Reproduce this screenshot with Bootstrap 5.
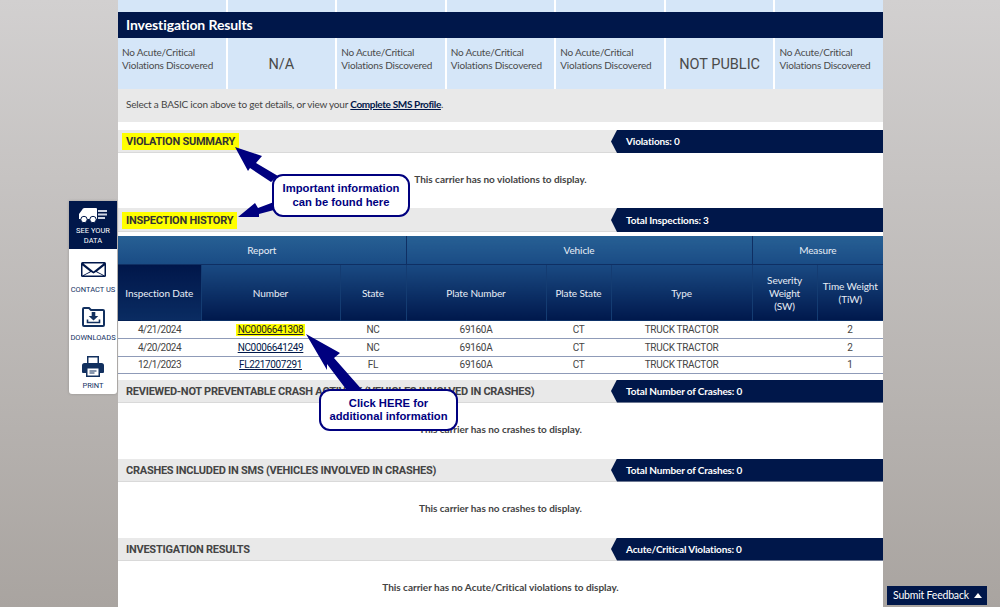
<!DOCTYPE html>
<html lang="en">
<head>
<meta charset="utf-8">
<title>Carrier Overview</title>
<link href="https://cdn.jsdelivr.net/npm/bootstrap@5.3.0/dist/css/bootstrap.min.css" rel="stylesheet">
<style>
html,body{height:607px;overflow:hidden}
body{background:linear-gradient(180deg,#d2d0d0 0,#a9a4a0 100%);font-family:Lato,"Liberation Sans",sans-serif;font-size:10px;letter-spacing:-.2px;color:#444;position:relative}
.sheet{width:765px;margin-left:118px;background:#fff;height:607px;overflow:hidden;position:relative}
.cellrow{display:grid;grid-template-columns:repeat(7,1fr);gap:2px;background:#fff}
.cellrow>div{background:#d5e6f8}
.toprow{height:12px}
.inforow{height:51px}
.inforow>div{padding:8px 4px;line-height:13px;font-size:10px;color:#4a4a4a;white-space:nowrap}
.inforow>.bigcell{font-family:Roboto,sans-serif;font-size:14.5px;letter-spacing:0;display:flex;align-items:center;justify-content:center;padding:2px 0 0}
.res-bar{height:26px;background:#00174a;color:#fff;font-weight:700;font-size:14px;letter-spacing:-.1px;padding-left:8px;line-height:26px}
.hint-bar{height:33px;background:#e9e9e9;padding-left:8px;line-height:31px;margin-bottom:8px}
.hint-bar a{color:#00174a;font-weight:700;letter-spacing:-.35px}
.sec-head{height:23px;background:#e9e9e9;border-bottom:1px solid #d9d9d9;padding-left:8px}
.sec-tall{height:24px}
.sec-tall .hl{margin-top:2px}
.sec-title{font-family:Roboto,sans-serif;font-size:11px;font-weight:700;color:#444;line-height:1;white-space:nowrap;letter-spacing:-.25px;margin-top:2px}
.hl{background:#ffff00;color:#333;margin:0 0 0 -4px;padding:3px 4px;display:inline-block}
.ribbon{flex:0 0 272px;align-self:stretch;margin-bottom:-1px;background:#00174a;color:#fff;font-weight:700;font-size:10px;letter-spacing:-.15px;display:flex;align-items:center;padding-left:15px;clip-path:polygon(6px 0,100% 0,100% 100%,6px 100%,0 50%)}
.sec-body{height:56px;text-align:center;font-weight:700;color:#444;padding-top:19px;line-height:14px;letter-spacing:-.03px}
.sec-first{height:55px}
.rec{width:765px;table-layout:fixed;border-collapse:collapse;margin:4px 0 5.5px}
.rec th{color:#e8eef6;font-weight:400;font-size:10px;letter-spacing:-.1px;text-align:center;vertical-align:middle;padding:1px 0 0;line-height:13px}
.rec .r1 th{height:28px;background:linear-gradient(180deg,#276094,#1a4c85);border-right:1px solid #0f2f63;border-bottom:1px solid #0f2f63}
.rec .r2 th{height:57px;background:linear-gradient(180deg,#1a4a83,#00184c);border-right:1px solid #143c72}
.rec .r1 th:last-child,.rec .r2 th:last-child{border-right:0}
.rec .r2 .dark{background:linear-gradient(180deg,#00164a,#0a2c62)}
.rec td{height:17.5px;padding:0;text-align:center;font-family:Roboto,sans-serif;font-size:10px;letter-spacing:-.3px;line-height:15px;color:#444;border-bottom:1.5px solid #8f9bb8}
.rec td a{color:#00174a;letter-spacing:-.35px}
.rec .dt{letter-spacing:-.5px}
.rec a.hlink{background:#ffff00;padding:0 2px 1px;color:#222}
.sidetabs{position:absolute;left:69px;top:201px;width:48px;height:193px;background:#fff;border-radius:0 0 3px 3px;box-shadow:0 0 3px rgba(0,0,0,.2)}
.stab{height:48px;text-align:center;font-family:Roboto,sans-serif;font-size:7.5px;letter-spacing:0;line-height:10px;color:#12305f;display:flex;flex-direction:column;align-items:center;justify-content:space-between;padding-bottom:2px}
.stab.on{background:#00174a;color:#fff;padding:7px 0 3px}
.stab-mail{padding-top:13px}
.stab-down{padding-top:10px}
.stab-print{padding-top:11px}
.overlay{position:absolute;left:0;top:0;pointer-events:none}
.callout{position:absolute;background:#fff;border:2px solid #00007f;border-radius:11px;color:#00007f;font-family:"Liberation Sans",sans-serif;font-weight:700;font-size:11.25px;letter-spacing:0;line-height:13.5px;text-align:center;display:flex;align-items:center;justify-content:center}
.c1{left:272px;top:174px;width:138px;height:43px}
.c2{left:319px;top:389px;width:139px;height:42px}
.feedback{position:absolute;left:887px;top:586px;width:100px;height:19px;background:#00174a;color:#fff;font-size:10.5px;line-height:19px;padding-left:6px;letter-spacing:-.2px}
.tri{display:inline-block;width:0;height:0;border-left:4px solid transparent;border-right:4px solid transparent;border-bottom:5px solid #fff;margin-left:5px;vertical-align:1px}
.fade{position:absolute;left:36px;width:640px;bottom:-6px;height:16px;background:rgba(0,0,0,.1);filter:blur(6px)}
</style>
</head>
<body>
<main class="sheet">
  <div class="cellrow toprow"><div></div><div></div><div></div><div></div><div></div><div></div><div></div></div>
  <div class="res-bar">Investigation Results</div>
  <div class="cellrow inforow">
    <div>No Acute/Critical<br>Violations Discovered</div>
    <div class="bigcell">N/A</div>
    <div>No Acute/Critical<br>Violations Discovered</div>
    <div>No Acute/Critical<br>Violations Discovered</div>
    <div>No Acute/Critical<br>Violations Discovered</div>
    <div class="bigcell">NOT PUBLIC</div>
    <div>No Acute/Critical<br>Violations Discovered</div>
  </div>
  <div class="hint-bar">Select a BASIC icon above to get details, or view your <a href="#">Complete SMS Profile</a>.</div>

  <div class="sec-head d-flex justify-content-between align-items-center"><span class="sec-title hl">VIOLATION SUMMARY</span><div class="ribbon">Violations: 0</div></div>
  <div class="sec-body sec-first">This carrier has no violations to display.</div>

  <div class="sec-head sec-tall d-flex justify-content-between align-items-center"><span class="sec-title hl">INSPECTION HISTORY</span><div class="ribbon">Total Inspections: 3</div></div>
  <table class="rec">
    <colgroup><col style="width:83px"><col style="width:139px"><col style="width:66px"><col style="width:140px"><col style="width:65px"><col style="width:141px"><col style="width:65px"><col style="width:66px"></colgroup>
    <thead>
      <tr class="r1"><th colspan="3">Report</th><th colspan="3">Vehicle</th><th colspan="2">Measure</th></tr>
      <tr class="r2"><th class="dark">Inspection Date</th><th>Number</th><th>State</th><th>Plate Number</th><th>Plate State</th><th>Type</th><th>Severity<br>Weight<br>(SW)</th><th>Time Weight<br>(TiW)</th></tr>
    </thead>
    <tbody>
      <tr><td class="dt">4/21/2024</td><td><a class="hlink" href="#">NC0006641308</a></td><td>NC</td><td>69160A</td><td>CT</td><td>TRUCK TRACTOR</td><td></td><td>2</td></tr>
      <tr><td class="dt">4/20/2024</td><td><a href="#">NC0006641249</a></td><td>NC</td><td>69160A</td><td>CT</td><td>TRUCK TRACTOR</td><td></td><td>2</td></tr>
      <tr><td class="dt">12/1/2023</td><td><a href="#">FL2217007291</a></td><td>FL</td><td>69160A</td><td>CT</td><td>TRUCK TRACTOR</td><td></td><td>1</td></tr>
    </tbody>
  </table>

  <div class="sec-head d-flex justify-content-between align-items-center"><span class="sec-title">REVIEWED-NOT PREVENTABLE CRASH ACTIVITY (VEHICLES INVOLVED IN CRASHES)</span><div class="ribbon">Total Number of Crashes: 0</div></div>
  <div class="sec-body">This carrier has no crashes to display.</div>

  <div class="sec-head d-flex justify-content-between align-items-center"><span class="sec-title">CRASHES INCLUDED IN SMS (VEHICLES INVOLVED IN CRASHES)</span><div class="ribbon">Total Number of Crashes: 0</div></div>
  <div class="sec-body">This carrier has no crashes to display.</div>

  <div class="sec-head d-flex justify-content-between align-items-center"><span class="sec-title">INVESTIGATION RESULTS</span><div class="ribbon">Acute/Critical Violations: 0</div></div>
  <div class="sec-body">This carrier has no Acute/Critical violations to display.</div>
  <div class="fade"></div>
</main>

<nav class="sidetabs">
  <a class="stab on text-decoration-none" href="#">
    <svg width="28" height="15" viewBox="0 0 28 15"><path fill="#fff" d="M6 0h11a1 1 0 0 1 1 1v10H0V6l3-4a3 3 0 0 1 3-2z"/><circle cx="5" cy="11.5" r="3.2" fill="#fff" stroke="#00174a"/><circle cx="14" cy="11.5" r="3.2" fill="#fff" stroke="#00174a"/><path stroke="#cfd6e4" stroke-width="1.8" d="M19 3h9M19 6.5h9M19 10h7"/></svg>
    <span>SEE YOUR<br>DATA</span>
  </a>
  <a class="stab stab-mail text-decoration-none" href="#">
    <svg width="25" height="15" viewBox="0 0 25 15"><rect width="25" height="15" rx="1.5" fill="#00174a"/><path fill="#fff" d="M2.5 1.5h20L12.500 9.500z"/><path fill="#fff" d="M1.500 3.500l7.500 6-7.500 4zM23.500 3.500l-7.500 6 7.500 4zM3 13.500l7-3.500 2.500 1.500 2.500-1.500 7 3.500z"/></svg>
    <span>CONTACT US</span>
  </a>
  <a class="stab stab-down text-decoration-none" href="#">
    <svg width="23" height="20" viewBox="0 0 23 20"><path fill="#fff" stroke="#12305f" stroke-width="2" d="M1 2a1 1 0 0 1 1-1h5l2 2h12a1 1 0 0 1 1 1v14a1 1 0 0 1-1 1H2a1 1 0 0 1-1-1z"/><path fill="#12305f" d="M9.700 5h3.600v4h3l-4.800 4.500L6.700 9h3z"/><path fill="none" stroke="#12305f" stroke-width="1.600" d="M5.500 12.500v3h12v-3"/></svg>
    <span>DOWNLOADS</span>
  </a>
  <a class="stab stab-print text-decoration-none" href="#">
    <svg width="22" height="21" viewBox="0 0 22 21"><path fill="#12305f" d="M5 0h12v7H5z"/><path fill="#fff" d="M6.500 1.500h9V7h-9z"/><path fill="#12305f" d="M2.500 7h17A2.500 2.500 0 0 1 22 9.500V16a1 1 0 0 1-1 1h-3v4H4v-4H1a1 1 0 0 1-1-1V9.500A2.500 2.500 0 0 1 2.500 7z"/><path fill="#fff" d="M5.500 12.500h11v7h-11z"/><path fill="#12305f" d="M7.500 14.500h7v1h-7zM7.500 16.500h5v1h-5z"/></svg>
    <span>PRINT</span>
  </a>
</nav>

<svg class="overlay" width="1000" height="607" viewBox="0 0 1000 607" aria-hidden="true">
  <path fill="#00007f" d="M235 147L262 156 256 163 278 176 271 182 250 168 248 171z"/>
  <path fill="#00007f" d="M238 217L255 203 258 208 274 202 274 210 259 214 259 217z"/>
  <path fill="#00007f" d="M306 334L340 353 334 358 364 392 352 397 327 364 327 370z"/>
</svg>
<div class="callout c1"><span>Important information<br>can be found here</span></div>
<div class="callout c2"><span>Click HERE for<br>additional information</span></div>

<a class="feedback text-decoration-none" href="#">Submit Feedback<span class="tri"></span></a>
<script src="https://cdn.jsdelivr.net/npm/bootstrap@5.3.0/dist/js/bootstrap.bundle.min.js"></script>
</body>
</html>
